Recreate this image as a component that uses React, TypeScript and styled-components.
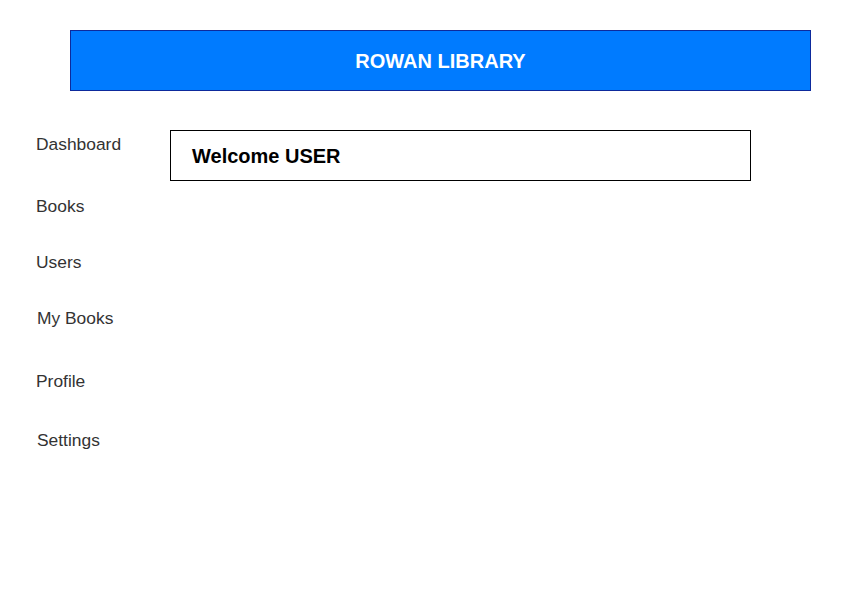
import React from "react";
import styled, { createGlobalStyle } from "styled-components";

const Global = createGlobalStyle`
  html, body { margin: 0; padding: 0; background: #ffffff; }
  body { font-family: "Liberation Sans", Arial, sans-serif; }
`;

const Page = styled.div`
  width: 850px;
  height: 609px;
  box-sizing: border-box;
  padding-top: 30px;
  display: flex;
  flex-direction: column;
`;

const Header = styled.header`
  margin-left: 70px;
  width: 741px;
  height: 61px;
  box-sizing: border-box;
  background: #007bff;
  border: 1px solid #0d2a9c;
  display: flex;
  align-items: center;
  justify-content: center;
  color: #ffffff;
  font-weight: bold;
  font-size: 20px;
  padding-top: 2px;
`;

const Main = styled.div`
  display: flex;
  flex-direction: row;
  margin-top: 39px;
`;

const Sidebar = styled.nav`
  width: 170px;
  box-sizing: border-box;
  padding-top: 4px;
  display: flex;
  flex-direction: column;
`;

const NavItem = styled.div<{ $top: number; $indent: number }>`
  margin-top: ${(p) => p.$top}px;
  padding-left: ${(p) => p.$indent}px;
  font-size: 17.4px;
  line-height: 20px;
  color: #333333;
`;

const Content = styled.section`
  flex: none;
`;

const WelcomeBox = styled.div`
  width: 581px;
  height: 51px;
  box-sizing: border-box;
  border: 1px solid #000000;
  display: flex;
  align-items: center;
  padding-left: 21px;
  padding-top: 1px;
  font-size: 20px;
  font-weight: bold;
  color: #000000;
`;

const items = [
  { label: "Dashboard", top: 0, indent: 36 },
  { label: "Books", top: 42, indent: 36 },
  { label: "Users", top: 36, indent: 36 },
  { label: "My Books", top: 36, indent: 37 },
  { label: "Profile", top: 43, indent: 36 },
  { label: "Settings", top: 39, indent: 37 },
];

export default function App() {
  return (
    <>
      <Global />
      <Page>
        <Header>ROWAN LIBRARY</Header>
        <Main>
          <Sidebar>
            {items.map((it) => (
              <NavItem key={it.label} $top={it.top} $indent={it.indent}>
                {it.label}
              </NavItem>
            ))}
          </Sidebar>
          <Content>
            <WelcomeBox>Welcome USER</WelcomeBox>
          </Content>
        </Main>
      </Page>
    </>
  );
}
